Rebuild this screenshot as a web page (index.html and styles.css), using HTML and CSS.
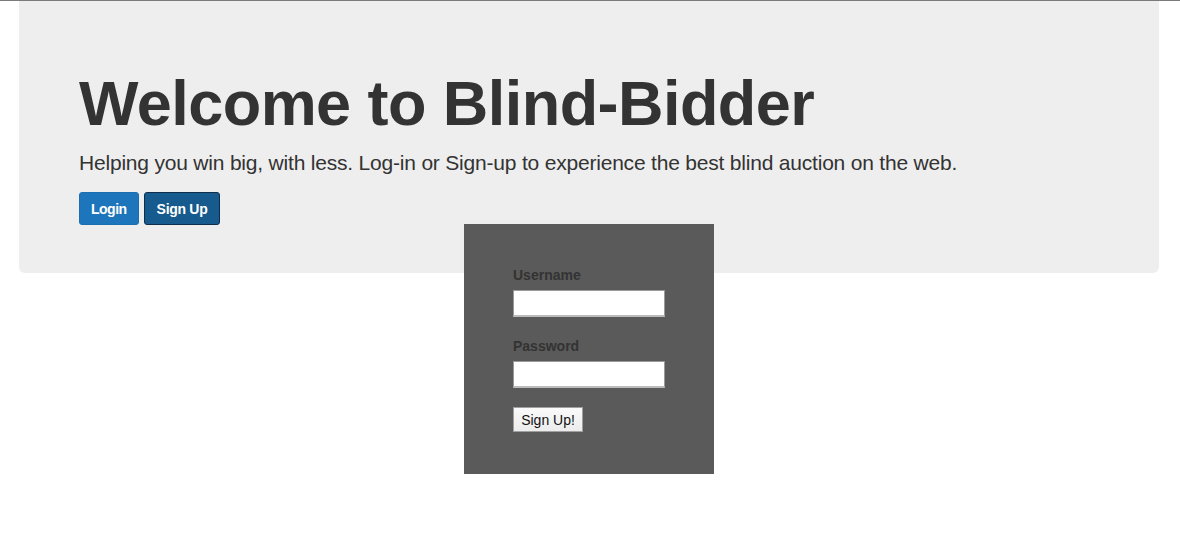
FILE: index.html
```html
<!DOCTYPE html>
<html>
<head>
<meta charset="utf-8">
<link rel="stylesheet" href="styles.css">
</head>
<body>
<div class="topline"></div>
<div class="container">
  <div class="jumbotron">
    <h1 class="title">Welcome to Blind-Bidder</h1>
    <p class="lead">Helping you win big, with less. Log-in or Sign-up to experience the best blind auction on the web.</p>
    <div class="actions">
      <button class="btn btn-login">Login</button>
      <button class="btn btn-signup">Sign Up</button>
    </div>
  </div>
</div>
<div class="overlay">
  <form class="signup-form">
    <div class="field">
      <label class="label">Username</label>
      <input class="input" type="text">
    </div>
    <div class="field">
      <label class="label">Password</label>
      <input class="input" type="password">
    </div>
    <button class="submit" type="button">Sign Up!</button>
  </form>
</div>
</body>
</html>
```

FILE: styles.css
```css
html, body {
  margin: 0;
  padding: 0;
  background: #fff;
  font-family: "Liberation Sans", Arial, sans-serif;
  color: #333;
}
.topline {
  height: 1px;
  background: #7a7a7a;
}
.container {
  padding: 0 21px 0 19px;
}
.jumbotron {
  background: #eee;
  border-radius: 0 0 6px 6px;
  padding: 68px 60px 47px;
  height: 157px;
}
.title {
  margin: 0 0 10px;
  font-size: 63px;
  line-height: 69px;
  font-weight: 700;
  color: #333;
  letter-spacing: -0.55px;
}
.lead {
  margin: 0 0 14px;
  font-size: 21px;
  line-height: 30px;
  font-weight: 400;
  color: #333;
  letter-spacing: -0.2px;
}
.actions {
  display: flex;
  gap: 5px;
}
.btn {
  font-family: "Liberation Sans", Arial, sans-serif;
  font-size: 14px;
  font-weight: 700;
  color: #fff;
  height: 33px;
  padding: 0 12px;
  border-radius: 3px;
  border: 1px solid transparent;
  letter-spacing: -0.3px;
}
.btn-login {
  background: #1d75bb;
  border-color: #1b6fb0;
  padding: 0 11px;
  letter-spacing: -0.5px;
}
.btn-signup {
  background: #175a8e;
  border-color: #0d2f4c;
}
.overlay {
  position: absolute;
  left: 464px;
  top: 224px;
  width: 250px;
  height: 250px;
  background: #5a5a5a;
  box-sizing: border-box;
  padding: 41px 49px 0;
}
.field {
  display: flex;
  flex-direction: column;
  align-items: flex-start;
  margin-bottom: 19px;
}
.label {
  font-size: 14px;
  font-weight: 700;
  line-height: 20px;
  color: #333;
  margin-bottom: 5px;
}
.input {
  width: 152px;
  height: 27px;
  box-sizing: border-box;
  margin: 0;
  border: 1px solid #9a9a9a;
  border-bottom: 2px solid #bcbcbc;
  background: #fff;
  padding: 0 4px;
}
.submit {
  font-family: "Liberation Sans", Arial, sans-serif;
  font-size: 14px;
  color: #111;
  height: 25px;
  width: 70px;
  padding: 0;
  margin: 0;
  border: 1px solid #a0a0a0;
  background: linear-gradient(#fafafa, #ececec);
  border-radius: 0;
}
```
